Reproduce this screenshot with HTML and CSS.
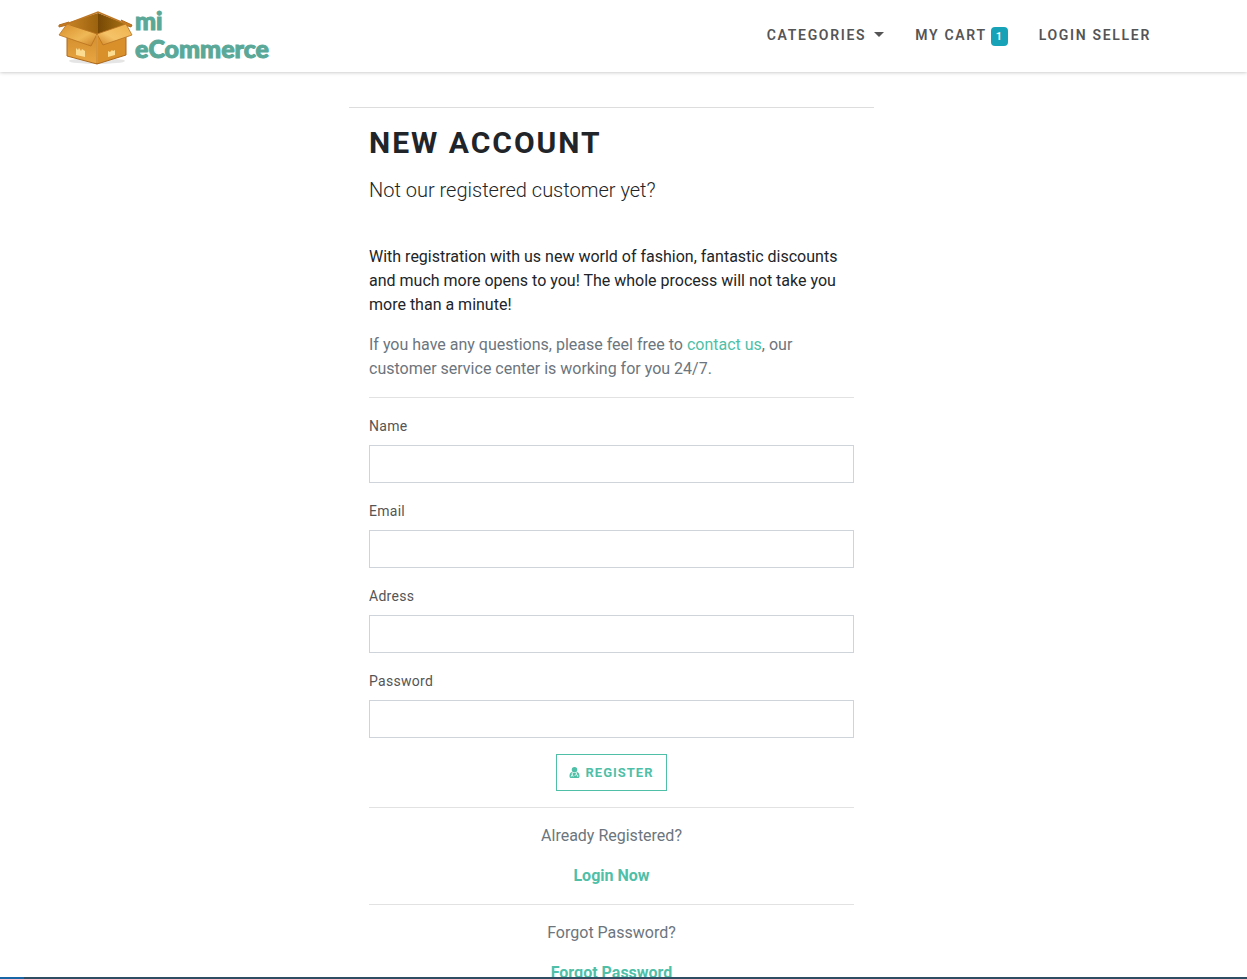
FILE: index.html
```html
<!DOCTYPE html>
<html lang="en">
<head>
<meta charset="utf-8">
<meta name="viewport" content="width=device-width, initial-scale=1">
<title>New account - mi eCommerce</title>
<link rel="stylesheet" href="styles.css">
</head>
<body>
<header class="navbar">
  <a class="brand" href="#">
    <svg class="brand-box" viewBox="0 0 76 56" aria-hidden="true">
      <defs>
        <linearGradient id="flap" x1="0" y1="0" x2="1" y2="1"><stop offset="0" stop-color="#d88e2a"/><stop offset=".6" stop-color="#efb857"/><stop offset="1" stop-color="#c97d22"/></linearGradient>
        <linearGradient id="flapr" x1="1" y1="0" x2="0" y2="1"><stop offset="0" stop-color="#eeb04a"/><stop offset=".6" stop-color="#f5c368"/><stop offset="1" stop-color="#cf8322"/></linearGradient>
        <linearGradient id="side" x1="0" y1="0" x2="0" y2="1"><stop offset="0" stop-color="#d08a2a"/><stop offset="1" stop-color="#e9a642"/></linearGradient>
        <linearGradient id="inner" x1="0" y1="0" x2="1" y2="0"><stop offset="0" stop-color="#c88425"/><stop offset="1" stop-color="#9c620e"/></linearGradient>
        <linearGradient id="innerr" x1="0" y1="0" x2="1" y2="0"><stop offset="0" stop-color="#764805"/><stop offset="1" stop-color="#a87214"/></linearGradient>
      </defs>
      <ellipse cx="40" cy="51" rx="28" ry="3" fill="#000" opacity=".1"/>
      <path d="M10 20 40 23V54L10 46Z" fill="url(#side)" stroke="#ad681a"/>
      <path d="M40 23 69 20V45L40 54Z" fill="#d98f2a" stroke="#ad681a"/>
      <path d="M2 15 12 12 10 15 2 17ZM64 10 75 15 74 17 68 15Z" fill="#c97b1e" stroke="#b06a1c"/>
      <path d="M10 13 41 3V24L34 30Z" fill="url(#inner)"/>
      <path d="M41 3 69 14 41 26Z" fill="url(#innerr)"/>
      <path d="M10 14 41 2 69 14" fill="none" stroke="#bd7725" stroke-width="1.5"/>
      <path d="M10 14 40 24 34 36 2 25Z" fill="url(#flap)" stroke="#b8711e" stroke-width=".8"/>
      <path d="M69 14 40 24 46 35 75 25Z" fill="url(#flapr)" stroke="#b8711e" stroke-width=".8"/>
      <path d="M40 25V53" stroke="#edb459"/>
      <path d="M19 38 21 40 22 38 24 41 25 39 28 41V47L19 45ZM51 41 53 42 55 40 56 41 58 40V45L51 47Z" fill="#fbdc91"/>
    </svg>
    <span class="brand-name">mi<br>eCommerce</span>
  </a>
  <nav class="menu">
    <a class="menu-link" href="#">Categories <span class="caret"></span></a>
    <a class="menu-link" href="#">My cart <span class="badge">1</span></a>
    <a class="menu-link" href="#">Login seller</a>
  </nav>
</header>
<main class="page">
  <section class="card">
    <h1 class="title">New account</h1>
    <p class="lead">Not our registered customer yet?</p>
    <p class="text">With registration with us new world of fashion, fantastic discounts and much more opens to you! The whole process will not take you more than a minute!</p>
    <p class="text muted">If you have any questions, please feel free to <a class="link" href="#">contact us</a>, our customer service center is working for you 24/7.</p>
    <hr class="rule">
    <form>
      <div class="field"><label class="label" for="name">Name</label><input class="input" id="name" type="text"></div>
      <div class="field"><label class="label" for="email">Email</label><input class="input" id="email" type="email"></div>
      <div class="field"><label class="label" for="adress">Adress</label><input class="input" id="adress" type="text"></div>
      <div class="field"><label class="label" for="password">Password</label><input class="input" id="password" type="password"></div>
      <div class="actions">
        <button class="button" type="submit">
          <svg class="button-icon" viewBox="0 0 22 24" aria-hidden="true"><circle cx="11" cy="6" r="6" fill="currentColor"/><path d="M5 11C1 12 0 17 0 20c0 3 2 4 4 4h14c2 0 4-1 4-4 0-3-1-8-5-9-2 3-10 3-12 0Z" fill="currentColor"/><path d="M6 13v5m-2 3v-1c0-3 4-3 4 0v1M15 13v3m-3 3c0-3 6-3 6 0v2" fill="none" stroke="#fff" stroke-width="2"/></svg>
          Register
        </button>
      </div>
    </form>
    <hr class="rule">
    <p class="text muted center">Already Registered?</p>
    <p class="text center"><a class="link strong" href="#">Login Now</a></p>
    <hr class="rule">
    <p class="text muted center">Forgot Password?</p>
    <p class="text center"><a class="link strong" href="#">Forgot Password</a></p>
  </section>
</main>
<footer class="bottom-bar"></footer>
</body>
</html>
```
FILE: styles.css
```css
* { box-sizing: border-box; }
body {
  margin: 0;
  height: 100vh;
  display: flex;
  flex-direction: column;
  font: 400 16px/24px Roboto, sans-serif;
  color: #212529;
  background: #fff;
}
a { text-decoration: none; }
.navbar {
  flex: none;
  z-index: 1;
  display: flex;
  justify-content: space-between;
  padding: 6px 96px 6px 57px;
  background: #fff;
  box-shadow: 0 0 4px rgba(0, 0, 0, .3);
}
.brand { display: flex; align-items: flex-start; gap: 2px; color: #5aa898; }
.brand-box { width: 76px; height: 56px; margin-top: 4px; }
.brand-name { font: 900 25px/28px Lato, sans-serif; -webkit-text-stroke: 1px #5aa898; }
.menu { display: flex; gap: 31px; padding-top: 17px; }
.menu-link {
  display: flex;
  align-items: center;
  height: 24px;
  font-size: 14px;
  font-weight: 600;
  letter-spacing: .12em;
  text-transform: uppercase;
  white-space: nowrap;
  color: #555;
}
.caret {
  margin: 0 0 2px 8px;
  border: 5px solid transparent;
  border-top-color: #555;
  border-bottom: 0;
}
.badge {
  margin: 2px 0 0 4px;
  padding: 4px 4px 3px 5px;
  border-radius: 4px;
  font-size: 11px;
  line-height: 12px;
  color: #fff;
  background: #17a2b8;
}
.page {
  flex: 1;
  min-height: 0;
  overflow-y: auto;
  scrollbar-width: none;
  padding: 35px 24px 0 0;
}
.card {
  max-width: 525px;
  margin: 0 auto;
  padding: 20px;
  border-top: 1px solid #ddd;
}
.title {
  margin: 0 0 18px;
  font-size: 30px;
  line-height: 29px;
  font-weight: 700;
  letter-spacing: 2px;
  text-transform: uppercase;
}
.lead { margin: 0 0 40px; font-size: 20px; line-height: 30px; font-weight: 300; }
.text { margin: 0 0 16px; }
.muted { color: #6c757d; }
.center { text-align: center; }
.link { color: #4fbfa8; }
.strong { font-weight: 700; }
.rule { margin: 16px 0; border: 0; border-top: 1px solid #e2e2e2; }
.field { margin-bottom: 16px; }
.label {
  display: block;
  margin-bottom: 7px;
  font-size: 14px;
  line-height: 24px;
  letter-spacing: .02em;
  color: #555;
}
.input {
  display: block;
  width: 100%;
  height: 38px;
  padding: 6px 12px;
  border: 1px solid #ced4da;
  border-radius: 0;
  font: inherit;
  background: #fff;
}
.actions { display: flex; justify-content: center; }
.button {
  display: flex;
  align-items: center;
  gap: 5px;
  height: 37px;
  padding: 0 12px;
  border: 1px solid #4fbfa8;
  font: 700 13px/18px Roboto, sans-serif;
  letter-spacing: 1px;
  text-transform: uppercase;
  color: #4fbfa8;
  background: #fff;
}
.button-icon { width: 11px; height: 11px; }
.bottom-bar { flex: none; height: 2px; background: linear-gradient(90deg, #1866a5 24px, #2f4d63 24px); }
```
